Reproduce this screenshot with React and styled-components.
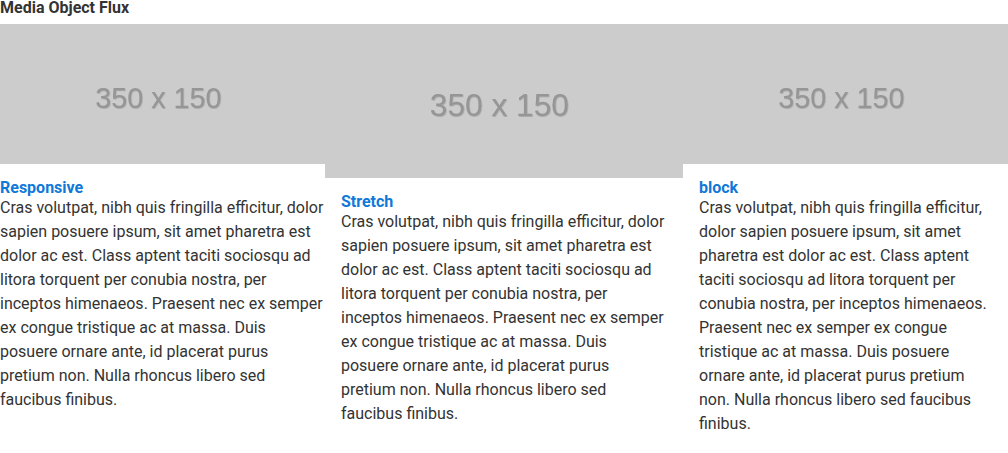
import React from "react";
import styled, { createGlobalStyle } from "styled-components";

const GlobalStyle = createGlobalStyle`
  body {
    margin: 0;
    background: #fff;
    font-family: Roboto, "Liberation Sans", sans-serif;
    color: #333;
  }
`;

const text =
  "Cras volutpat, nibh quis fringilla efficitur, dolor sapien posuere ipsum, sit amet pharetra est dolor ac est. Class aptent taciti sociosqu ad litora torquent per conubia nostra, per inceptos himenaeos. Praesent nec ex semper ex congue tristique ac at massa. Duis posuere ornare ante, id placerat purus pretium non. Nulla rhoncus libero sed faucibus finibus.";

const items = [
  { title: "Responsive", width: 325, height: 140, pad: "0" },
  { title: "Stretch", width: 358, height: 154, pad: "0 16px" },
  { title: "block", width: 325, height: 140, pad: "0 16px" },
];

function Placeholder({ height }) {
  return (
    <Img viewBox="0 0 350 150" preserveAspectRatio="none" $height={height}>
      <defs>
        <filter id="sh" x="-10%" y="-20%" width="120%" height="140%">
          <feDropShadow dx="0.6" dy="0.8" stdDeviation="0.6" floodColor="#777" floodOpacity="0.5" />
        </filter>
      </defs>
      <rect width="350" height="150" fill="#cccccc" />
      <text
        x="170.5"
        y="89.5"
        textAnchor="middle"
        fontFamily="'Liberation Sans', Arial, sans-serif"
        fontSize="31"
        fill="#969696"
        filter="url(#sh)"
      >
        350 x 150
      </text>
    </Img>
  );
}

export default function App() {
  return (
    <React.Fragment>
      <GlobalStyle />
      <Title>Media Object Flux</Title>
      <Row>
        {items.map((it) => (
          <Media key={it.title} $width={it.width}>
            <Placeholder height={it.height} />
            <Body $pad={it.pad}>
              <Heading>{it.title}</Heading>
              <Para>{text}</Para>
            </Body>
          </Media>
        ))}
      </Row>
    </React.Fragment>
  );
}

const Title = styled.h1`
  margin: 0 0 8px;
  font-size: 16px;
  line-height: 16px;
  font-weight: 700;
  color: #333;
`;

const Row = styled.div`
  display: flex;
  align-items: flex-start;
`;

const Media = styled.div`
  flex: 0 0 ${(p) => p.$width}px;
  display: flex;
  flex-direction: column;
`;

const Img = styled.svg`
  display: block;
  width: 100%;
  height: ${(p) => p.$height}px;
`;

const Body = styled.div`
  padding: ${(p) => p.$pad};
  margin-top: 16px;
`;

const Heading = styled.h3`
  margin: 0;
  font-size: 16px;
  line-height: 16px;
  font-weight: 700;
  color: #0f78d8;
`;

const Para = styled.p`
  margin: 0;
  font-size: 16px;
  line-height: 24px;
  color: #333;
`;
